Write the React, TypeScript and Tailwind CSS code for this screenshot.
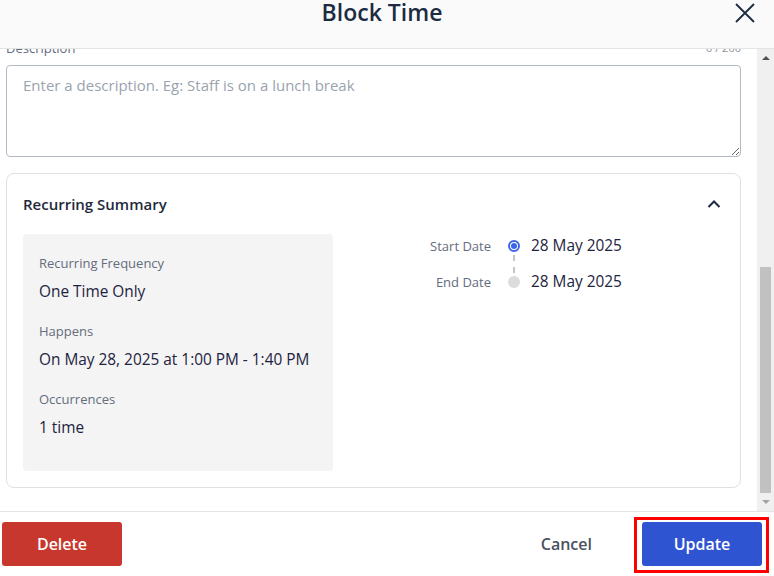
import React from 'react'

const font = { fontFamily: '"Open Sans", "Noto Sans", sans-serif' }

function SummaryItem({ label, value, first }: { label: string; value: string; first?: boolean }) {
  return (
    <div className={first ? '' : 'mt-[19px]'}>
      <div className="text-[13px] leading-[18px] text-[#646c7d]">{label}</div>
      <div className="mt-[9px] text-[15.4px] leading-[22px] text-[#1e2340]">{value}</div>
    </div>
  )
}

export default function App() {
  return (
    <div className="w-[774px] h-[576px] bg-white flex flex-col overflow-hidden" style={font}>
      {/* Header */}
      <div className="h-[49px] shrink-0 bg-[#fafafa] border-b border-[#e3e3e3] relative flex items-start justify-center pr-[10px]">
        <h2 className="text-[23px] leading-[25px] font-semibold text-[#1c2b41]">Block Time</h2>
        <button className="absolute right-[18px] top-[2px] text-[#1c2b41]">
          <svg width="22" height="22" viewBox="0 0 22 22" fill="none" stroke="currentColor" strokeWidth="1.8">
            <path d="M2 2 L20 20 M20 2 L2 20" />
          </svg>
        </button>
      </div>

      {/* Body */}
      <div className="flex flex-1 min-h-0">
        <div className="flex-1 overflow-hidden pl-[6px] pr-[16px]">
          <div className="-mt-[10px]">
            <div className="flex justify-between items-end h-[18px]">
              <span className="text-[13px] leading-[18px] text-[#646c7d]">Description</span>
              <span className="text-[11px] leading-[18px] text-[#8a919c]">0 / 200</span>
            </div>
            <textarea
              className="mt-2 block w-full h-[92px] border border-[#b3bac5] rounded-[4px] px-4 py-[8px] text-[15px] leading-[22px] text-[#1e2340] placeholder:text-[#9aa3ae] outline-none"
              placeholder="Enter a description. Eg: Staff is on a lunch break"
              style={font}
            />

            {/* Recurring card */}
            <div className="mt-4 border border-[#e0e0e0] rounded-[8px] px-4 pt-[18px] pb-4">
              <div className="flex items-center justify-between h-6">
                <span className="text-[15px] font-semibold text-[#1e2a3b]">Recurring Summary</span>
                <svg width="14" height="10" viewBox="0 0 14 10" fill="none" stroke="#1c2b41" strokeWidth="2" className="mr-[3px]">
                  <path d="M1.5 8 L7 2.5 L12.5 8" />
                </svg>
              </div>
              <div className="mt-[18px] flex">
                <div className="w-[310px] bg-[#f4f4f4] rounded-[4px] px-4 pt-5 pb-[32px]">
                  <SummaryItem first label="Recurring Frequency" value="One Time Only" />
                  <SummaryItem label="Happens" value="On May 28, 2025 at 1:00 PM - 1:40 PM" />
                  <SummaryItem label="Occurrences" value="1 time" />
                </div>
                <div className="flex-1 flex">
                  <div className="w-[158px] text-right text-[13px] text-[#646c7d]">
                    <div className="h-6 leading-6">Start Date</div>
                    <div className="h-6 leading-6 mt-3">End Date</div>
                  </div>
                  <div className="ml-[17px] w-3 flex flex-col items-center">
                    <div className="h-6 flex items-center">
                      <div className="w-3 h-3 rounded-full border-2 border-[#3d64e8] flex items-center justify-center">
                        <div className="w-[6px] h-[6px] rounded-full bg-[#3d64e8]" />
                      </div>
                    </div>
                    <div className="border-l-2 border-dashed border-[#c4c4c4] -my-[3px]" style={{ height: 18 }} />
                    <div className="h-6 flex items-center">
                      <div className="w-3 h-3 rounded-full bg-[#dcdcdc]" />
                    </div>
                  </div>
                  <div className="ml-[11px] text-[15.4px] text-[#1e2340]">
                    <div className="h-6 leading-6">28 May 2025</div>
                    <div className="h-6 leading-6 mt-3">28 May 2025</div>
                  </div>
                </div>
              </div>
            </div>
          </div>
        </div>

        {/* Scrollbar */}
        <div className="w-[17px] shrink-0 bg-[#f0f0f0] flex flex-col items-center">
          <div className="h-[17px] flex items-center justify-center">
            <svg width="8" height="5" viewBox="0 0 8 5"><path d="M0 5 L4 1 L8 5 Z" fill="#505050" /></svg>
          </div>
          <div className="flex-1 w-full flex flex-col px-[3px] pb-[1px]">
            <div className="h-[201px]" />
            <div className="flex-1 bg-[#c1c1c1]" />
          </div>
          <div className="h-[17px] flex items-center justify-center">
            <svg width="8" height="5" viewBox="0 0 8 5"><path d="M0 0 L4 4 L8 0 Z" fill="#a3a3a3" /></svg>
          </div>
        </div>
      </div>

      {/* Footer */}
      <div className="h-[65px] shrink-0 border-t border-[#e3e3e3] flex items-start pt-[10px] pl-[2px] pr-[12px]">
        <button className="w-[120px] h-[44px] rounded-[3px] bg-[#c8372d] text-white text-[16px] font-semibold" style={font}>
          Delete
        </button>
        <div className="flex-1" />
        <button className="h-[44px] text-[16px] text-[#4a5160] font-semibold mr-[50px]" style={font}>
          Cancel
        </button>
        <div className="relative">
          <div className="absolute -left-[8px] -right-[7px] -top-[5px] -bottom-[7px] border-[3px] border-[#ff0000]" />
          <button className="relative w-[120px] h-[44px] rounded-[3px] bg-[#2f54d1] text-white text-[16px] font-semibold" style={font}>
            Update
          </button>
        </div>
      </div>
    </div>
  )
}
